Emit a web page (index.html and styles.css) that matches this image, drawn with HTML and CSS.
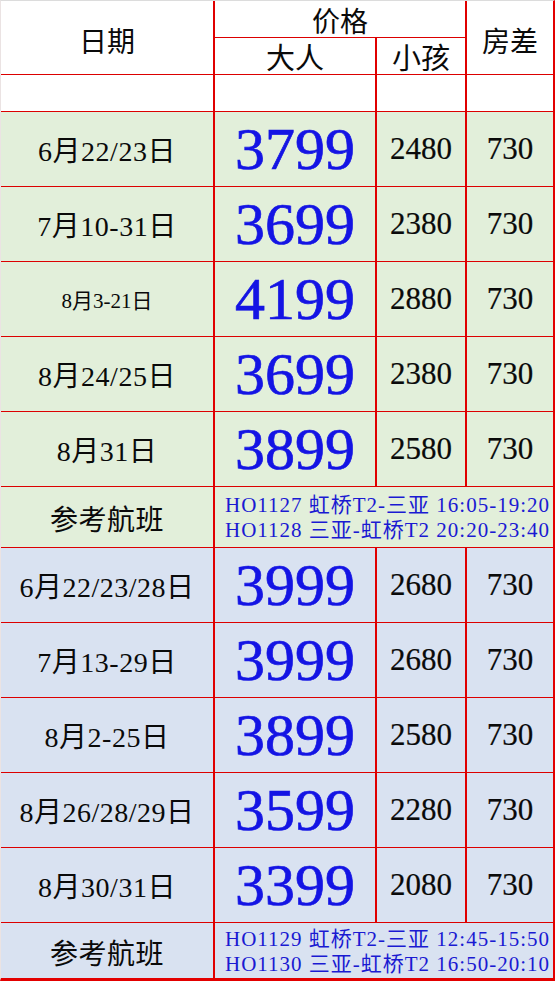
FILE: index.html
```html
<!DOCTYPE html>
<html lang="zh">
<head>
<meta charset="utf-8">
<link rel="stylesheet" href="styles.css">
</head>
<body>
<table class="price-table">
  <colgroup>
    <col class="c-date"><col class="c-adult"><col class="c-child"><col class="c-room">
  </colgroup>
  <tr class="h1">
    <th rowspan="2" class="hd top">日期</th>
    <th colspan="2" class="hd">价格</th>
    <th rowspan="2" class="hd top last">房差</th>
  </tr>
  <tr class="h2">
    <th class="hd sub">大人</th>
    <th class="hd sub">小孩</th>
  </tr>
  <tr class="blank"><td></td><td></td><td></td><td class="last"></td></tr>

  <tr class="row green"><td class="date">6月22/23日</td><td class="adult">3799</td><td class="num">2480</td><td class="num last">730</td></tr>
  <tr class="row green"><td class="date">7月10-31日</td><td class="adult">3699</td><td class="num">2380</td><td class="num last">730</td></tr>
  <tr class="row green"><td class="date small">8月3-21日</td><td class="adult">4199</td><td class="num">2880</td><td class="num last">730</td></tr>
  <tr class="row green"><td class="date">8月24/25日</td><td class="adult">3699</td><td class="num">2380</td><td class="num last">730</td></tr>
  <tr class="row green"><td class="date">8月31日</td><td class="adult">3899</td><td class="num">2580</td><td class="num last">730</td></tr>
  <tr class="flight green f1">
    <td class="date">参考航班</td>
    <td colspan="3" class="fl last"><div>HO1127 虹桥T2-三亚 16:05-19:20</div><div>HO1128 三亚-虹桥T2 20:20-23:40</div></td>
  </tr>

  <tr class="row blue"><td class="date">6月22/23/28日</td><td class="adult">3999</td><td class="num">2680</td><td class="num last">730</td></tr>
  <tr class="row blue"><td class="date">7月13-29日</td><td class="adult">3999</td><td class="num">2680</td><td class="num last">730</td></tr>
  <tr class="row blue"><td class="date">8月2-25日</td><td class="adult">3899</td><td class="num">2580</td><td class="num last">730</td></tr>
  <tr class="row blue"><td class="date">8月26/28/29日</td><td class="adult">3599</td><td class="num">2280</td><td class="num last">730</td></tr>
  <tr class="row blue"><td class="date">8月30/31日</td><td class="adult">3399</td><td class="num">2080</td><td class="num last">730</td></tr>
  <tr class="flight blue f2 end">
    <td class="date">参考航班</td>
    <td colspan="3" class="fl last"><div>HO1129 虹桥T2-三亚 12:45-15:50</div><div>HO1130 三亚-虹桥T2 16:50-20:10</div></td>
  </tr>
</table>
</body>
</html>
```

FILE: styles.css
```css
html, body {
  margin: 0;
  padding: 0;
  background: #ffffff;
}

.price-table {
  width: 555px;
  table-layout: fixed;
  border-collapse: separate;
  border-spacing: 0;
  font-family: "Liberation Serif", "Noto Sans CJK SC", serif;
  color: #0a0a0a;
  border-top: 1px solid #dcdcdc;
  border-left: 1px solid #ebe3e3;
  border-right: 2px solid #e30000;
  border-bottom: 3px solid #e30000;
}

.c-date { width: 214px; }
.c-adult { width: 162px; }
.c-child { width: 90px; }
.c-room { width: 86px; }

.price-table th,
.price-table td {
  border: 0;
  border-right: 2px solid #e00000;
  border-bottom: 1px solid #dc0000;
  padding: 0;
  text-align: center;
  vertical-align: middle;
  white-space: nowrap;
  box-sizing: border-box;
}

.price-table .last { border-right: 0; }
.price-table .end td { border-bottom: 0; }

.hd {
  font-weight: normal;
  font-size: 28px;
  line-height: 1;
  font-family: "Noto Sans CJK SC", serif;
}

.h1 { height: 37px; }
.h1 th { padding-top: 2px; }
.h1 th.top { padding-top: 4px; }
.h2 { height: 37px; }
.sub { font-size: 29px; padding-top: 4px; }
.blank { height: 37px; }

.row { height: 75px; }
.green { background: #e2efda; }
.blue { background: #d9e2f1; }

.date {
  font-size: 28px;
  letter-spacing: 0.5px;
  padding-top: 8px;
}
.date.small { font-size: 21px; letter-spacing: 0; }

.adult {
  font-size: 60px;
  color: #1414e4;
  -webkit-text-stroke: 0.7px #1414e4;
  padding-top: 14px;
}

.num {
  font-size: 31px;
  padding-top: 8px;
  -webkit-text-stroke: 0.2px #0a0a0a;
}

.f1 { height: 61px; }
.f2 { height: 55px; }
.f1 .date, .f2 .date { padding-top: 2px; }

.fl {
  text-align: left;
  padding-left: 7px !important;
  font-size: 21px;
  letter-spacing: 1px;
  line-height: 25px;
  color: #1a1ad2;
  padding-top: 2px !important;
}
```
